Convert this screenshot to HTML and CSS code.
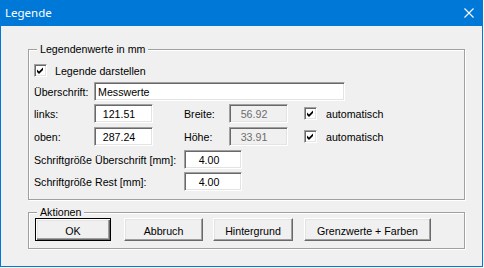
FILE: index.html
```html
<!DOCTYPE html>
<html lang="de">
<head>
<meta charset="utf-8">
<title>Legende</title>
<link rel="stylesheet" href="styles.css">
</head>
<body>
<div class="window">
  <div class="titlebar">
    <span class="title">Legende</span>
    <svg class="close" width="10" height="10" viewBox="0 0 10 10"><path d="M0.5 0.5 L9.5 9.5 M9.5 0.5 L0.5 9.5" stroke="#fff" stroke-width="1.1" fill="none"/></svg>
  </div>
  <div class="content">
    <div class="group g1">
      <div class="legend">Legendenwerte in mm</div>
      <div class="cbrow">
        <span class="cb"><svg width="9" height="9" viewBox="0 0 9 9"><polygon points="1,3.5 3,5.5 7,1.5 7,4 3,8 1,6" fill="#000"/></svg></span>
        <span class="cbtext">Legende darstellen</span>
      </div>
      <div class="row r1">
        <span class="lbl lw">Überschrift:</span>
        <span class="input wide">Messwerte</span>
      </div>
      <div class="row r2">
        <span class="lbl lw">links:</span>
        <span class="input num">121.51</span>
        <span class="lbl lw2 gapl">Breite:</span>
        <span class="input num dis">56.92</span>
        <span class="cb cbgap"><svg width="9" height="9" viewBox="0 0 9 9"><polygon points="1,3.5 3,5.5 7,1.5 7,4 3,8 1,6" fill="#000"/></svg></span>
        <span class="cbtext2">automatisch</span>
      </div>
      <div class="row r3">
        <span class="lbl lw">oben:</span>
        <span class="input num">287.24</span>
        <span class="lbl lw2 gapl">Höhe:</span>
        <span class="input num dis">33.91</span>
        <span class="cb cbgap"><svg width="9" height="9" viewBox="0 0 9 9"><polygon points="1,3.5 3,5.5 7,1.5 7,4 3,8 1,6" fill="#000"/></svg></span>
        <span class="cbtext2">automatisch</span>
      </div>
      <div class="row r4">
        <span class="lbl lw3">Schriftgröße Überschrift [mm]:</span>
        <span class="input num small">4.00</span>
      </div>
      <div class="row r5">
        <span class="lbl lw3">Schriftgröße Rest [mm]:</span>
        <span class="input num small">4.00</span>
      </div>
    </div>
    <div class="group g2">
      <div class="legend">Aktionen</div>
      <div class="buttons">
        <button class="btn default b-ok" type="button"><span>OK</span></button>
        <button class="btn b-abbruch" type="button"><span>Abbruch</span></button>
        <button class="btn b-hint" type="button"><span>Hintergrund</span></button>
        <button class="btn b-grenz" type="button"><span>Grenzwerte + Farben</span></button>
      </div>
    </div>
  </div>
</div>
</body>
</html>
```

FILE: styles.css
```css
html, body {
  margin: 0;
  padding: 0;
  background: #ffffff;
}

body {
  font-family: "Liberation Sans", Arial, sans-serif;
  font-size: 8pt;
  color: #000;
}

.window {
  width: 483px;
  height: 267px;
  box-sizing: border-box;
  border: 1px solid #0078d7;
  border-top: none;
  background: #f0f0f0;
  display: flex;
  flex-direction: column;
}

.titlebar {
  height: 26px;
  flex: none;
  background: #0078d7;
  color: #fff;
  display: flex;
  align-items: center;
  justify-content: space-between;
  padding: 0 8px 0 4px;
  box-sizing: border-box;
}

.title {
  font-family: "Noto Sans", "Open Sans", sans-serif;
  font-size: 11.5px;
  line-height: 14px;
}

.close {
  display: block;
}

.content {
  padding-left: 27px;
}

.group {
  box-sizing: border-box;
  width: 437px;
  border: 1px solid #a0a0a0;
  box-shadow: inset 1px 1px 0 #ffffff, 1px 1px 0 #ffffff;
}

.g1 {
  margin-top: 23px;
  height: 151px;
  padding-left: 5px;
}

.g2 {
  margin-top: 12px;
  height: 37px;
  padding-left: 5px;
}

.legend {
  display: table;
  margin-top: -7px;
  margin-left: 3px;
  padding: 0 3px;
  line-height: 13px;
  background: #f0f0f0;
}

.cbrow {
  display: flex;
  align-items: center;
  height: 13px;
  margin-top: 8px;
}

.cb {
  box-sizing: border-box;
  width: 13px;
  height: 13px;
  flex: none;
  background: #fff;
  border: 1px solid;
  border-color: #a0a0a0 #ffffff #ffffff #a0a0a0;
  box-shadow: inset 1px 1px 0 #696969, inset -1px -1px 0 #e3e3e3;
  display: flex;
  align-items: center;
  justify-content: center;
}

.cb svg {
  display: block;
}

.cbtext {
  margin-left: 8px;
}

.cbtext2 {
  margin-left: 9px;
}

.cbgap {
  margin-left: 16px;
}

.row {
  display: flex;
  align-items: center;
  height: 19px;
}

.r1 { margin-top: 5px; }
.r2 { margin-top: 3px; }
.r3 { margin-top: 4px; }
.r4 { margin-top: 4px; }
.r5 { margin-top: 3px; }

.lbl {
  flex: none;
  white-space: nowrap;
}

.lw { width: 60px; }
.lw2 { width: 45px; }
.lw3 { width: 150px; }
.gapl { margin-left: 31px; }

.input {
  box-sizing: border-box;
  height: 19px;
  flex: none;
  background: #fff;
  border: 1px solid;
  border-color: #a0a0a0 #ffffff #ffffff #a0a0a0;
  box-shadow: inset 1px 1px 0 #696969, inset -1px -1px 0 #e3e3e3;
  display: flex;
  align-items: center;
  white-space: nowrap;
}

.wide {
  width: 251px;
  padding-left: 3px;
}

.num {
  width: 59px;
  justify-content: center;
  padding-right: 9px;
}

.small {
  width: 58px;
  padding-right: 8px;
}

.dis {
  background: #f0f0f0;
  color: #6d6d6d;
}

.buttons {
  display: flex;
  margin-top: -1px;
  padding-left: 1px;
}

.btn {
  box-sizing: border-box;
  height: 23px;
  flex: none;
  font: inherit;
  color: #000;
  background: #f0f0f0;
  border: 1px solid;
  border-color: #ffffff #696969 #696969 #ffffff;
  box-shadow: inset -1px -1px 0 #a0a0a0, inset 1px 1px 0 #e3e3e3;
  padding: 2px 0 0 0;
  margin: 0;
  display: flex;
  align-items: center;
  justify-content: center;
}

.btn.default {
  border: 1px solid #000000;
  box-shadow: inset 1px 1px 0 #ffffff, inset -1px -1px 0 #696969, inset -2px -2px 0 #a0a0a0, inset 2px 2px 0 #e3e3e3;
}

.b-ok { width: 76px; }
.b-abbruch { width: 79px; margin-left: 13px; }
.b-hint { width: 80px; margin-left: 10px; }
.b-grenz { width: 127px; margin-left: 11px; }
```
